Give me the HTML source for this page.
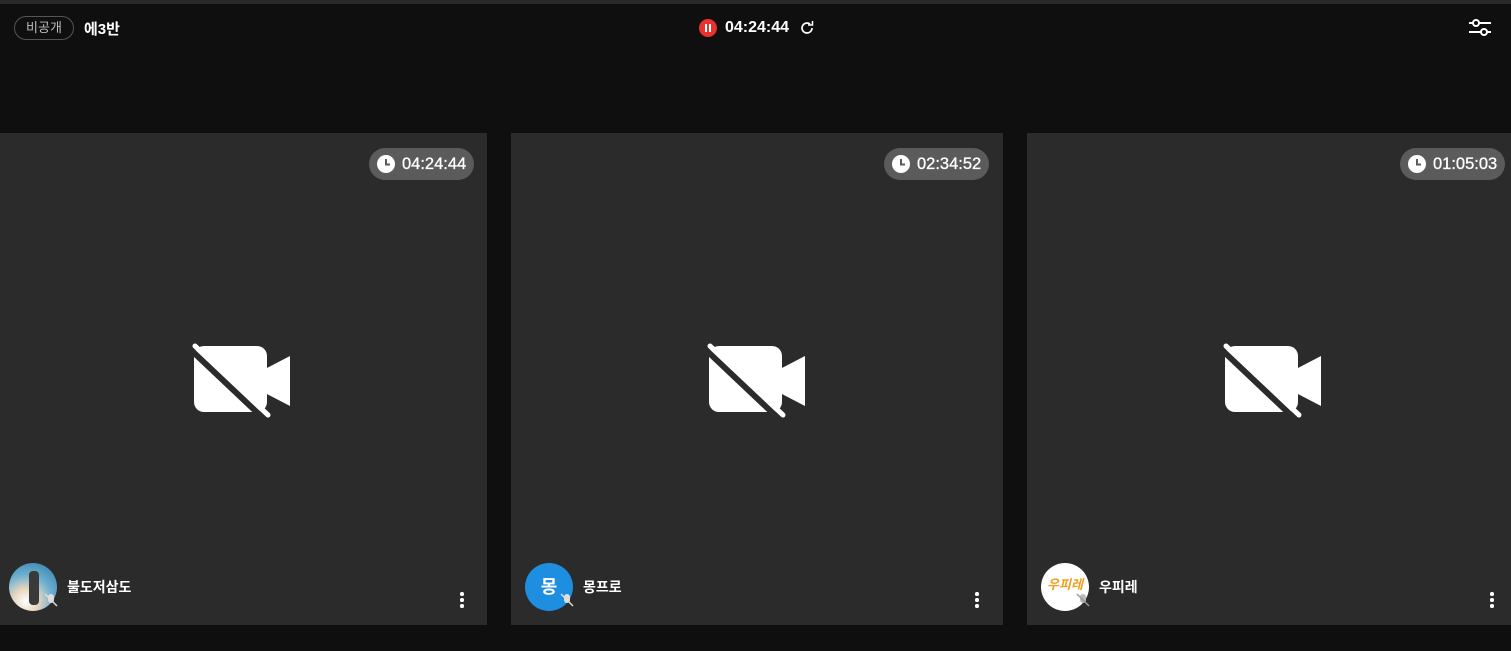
<!DOCTYPE html>
<html><head><meta charset="utf-8"><style>
*{margin:0;padding:0;box-sizing:border-box}
body{width:1511px;height:651px;background:#0f0f0f;overflow:hidden;position:relative;font-family:"Liberation Sans","Noto Sans CJK KR",sans-serif;color:#fff}
.top{position:absolute;left:0;top:0;width:1511px;height:4px;background:#2a2a2a}
.tag{position:absolute;left:14px;top:16px;width:60px;height:24px;border:1px solid #555;border-radius:12px;font-size:13px;color:#bbb;text-align:center;line-height:22px}
.title{position:absolute;left:84px;top:18px;font-size:15px;font-weight:bold}
.rec{position:absolute;left:699px;top:19px;width:18px;height:18px;border-radius:50%;background:#e8322e}
.rec:before,.rec:after{content:"";position:absolute;top:5px;width:2px;height:8px;background:#fff}
.rec:before{left:6px}.rec:after{left:10px}
.ttime{position:absolute;left:725px;top:19px;font-size:16px;font-weight:bold}
.tile{position:absolute;top:133px;height:492px;width:492px;background:#2b2b2b}
.badge{position:absolute;top:15px;height:32px;border-radius:16px;background:#5b5b5b;font-size:16.5px;line-height:32px;padding-left:33px;padding-right:8px;-webkit-text-stroke:0.3px #fff}
.badge svg{position:absolute;left:8px;top:7px}
.cam{position:absolute;top:208px}
.av{position:absolute;top:430px;width:48px;height:48px;border-radius:50%}
.mic{position:absolute;top:459px;width:16px;height:16px}
.name{position:absolute;top:444px;font-size:14px;font-weight:bold}
.dots{position:absolute;top:459px;width:4px}
.dots i{display:block;width:3.5px;height:3.5px;border-radius:50%;background:#fff;margin-bottom:2.5px}
</style></head><body>
<div class="top"></div>
<div class="tag">비공개</div>
<div class="title">에3반</div>
<div class="rec"></div>
<div class="ttime">04:24:44</div>
<svg style="position:absolute;left:798px;top:19px" width="18" height="18" viewBox="0 0 18 18"><path d="M14 9a5 5 0 1 1-2-4" fill="none" stroke="#fff" stroke-width="1.7"/><path d="M10 4h4.5V0" fill="none" stroke="#fff" stroke-width="1.5" transform="translate(0,2)"/></svg>
<svg style="position:absolute;left:1468px;top:18px" width="24" height="20" viewBox="0 0 24 20"><path d="M1 5h22M1 14h22" stroke="#fff" stroke-width="2"/><circle cx="8" cy="5" r="3" fill="#0f0f0f" stroke="#fff" stroke-width="2"/><circle cx="16" cy="14" r="3" fill="#0f0f0f" stroke="#fff" stroke-width="2"/></svg>

<div class="tile" style="left:-5px">
 <div class="badge" style="left:374px"><svg width="18" height="18" viewBox="0 0 18 18"><circle cx="9" cy="9" r="9" fill="#fff"/><path d="M9 4v5.5h4" stroke="#5b5b5b" stroke-width="2" fill="none"/></svg>04:24:44</div>
 <svg class="cam" style="left:195px" width="104" height="80" viewBox="0 0 104 80"><rect x="4" y="5" width="73" height="66" rx="10" fill="#fff"/><path d="M75 28l25-13v50l-25-13z" fill="#fff"/><path d="M1 9l73 69" stroke="#2b2b2b" stroke-width="6"/><path d="M5 5l73 69" stroke="#fff" stroke-width="5" stroke-linecap="round"/></svg>
 <div class="av" style="left:14px;background:radial-gradient(circle at 35% 80%,#fff 0,#e8d7c0 25%,#6aaed0 55%,#2b77a3 100%)"><div style="position:absolute;left:20px;top:8px;width:10px;height:34px;background:#3a3a3a;border-radius:4px"></div></div>
 <svg class="mic" style="left:48px" viewBox="0 0 16 16"><rect x="5" y="2" width="6" height="9" rx="3" fill="#ddd"/><path d="M2 2l12 12" stroke="#ddd" stroke-width="1.5"/></svg>
 <div class="name" style="left:72px">불도저삼도</div>
 <div class="dots" style="left:465px"><i></i><i></i><i></i></div>
</div>

<div class="tile" style="left:511px">
 <div class="badge" style="left:373px"><svg width="18" height="18" viewBox="0 0 18 18"><circle cx="9" cy="9" r="9" fill="#fff"/><path d="M9 4v5.5h4" stroke="#5b5b5b" stroke-width="2" fill="none"/></svg>02:34:52</div>
 <svg class="cam" style="left:194px" width="104" height="80" viewBox="0 0 104 80"><rect x="4" y="5" width="73" height="66" rx="10" fill="#fff"/><path d="M75 28l25-13v50l-25-13z" fill="#fff"/><path d="M1 9l73 69" stroke="#2b2b2b" stroke-width="6"/><path d="M5 5l73 69" stroke="#fff" stroke-width="5" stroke-linecap="round"/></svg>
 <div class="av" style="left:14px;background:#1e8ee0;font-size:18px;font-weight:bold;text-align:center;line-height:48px">몽</div>
 <svg class="mic" style="left:48px" viewBox="0 0 16 16"><rect x="5" y="2" width="6" height="9" rx="3" fill="#ddd"/><path d="M2 2l12 12" stroke="#ddd" stroke-width="1.5"/></svg>
 <div class="name" style="left:72px">몽프로</div>
 <div class="dots" style="left:464px"><i></i><i></i><i></i></div>
</div>

<div class="tile" style="left:1027px">
 <div class="badge" style="left:373px"><svg width="18" height="18" viewBox="0 0 18 18"><circle cx="9" cy="9" r="9" fill="#fff"/><path d="M9 4v5.5h4" stroke="#5b5b5b" stroke-width="2" fill="none"/></svg>01:05:03</div>
 <svg class="cam" style="left:194px" width="104" height="80" viewBox="0 0 104 80"><rect x="4" y="5" width="73" height="66" rx="10" fill="#fff"/><path d="M75 28l25-13v50l-25-13z" fill="#fff"/><path d="M1 9l73 69" stroke="#2b2b2b" stroke-width="6"/><path d="M5 5l73 69" stroke="#fff" stroke-width="5" stroke-linecap="round"/></svg>
 <div class="av" style="left:14px;background:#fff;color:#f0a020;font-size:13px;font-weight:bold;text-align:center;line-height:44px;font-style:italic">우피레</div>
 <svg class="mic" style="left:48px" viewBox="0 0 16 16"><rect x="5" y="2" width="6" height="9" rx="3" fill="#bbb"/><path d="M2 2l12 12" stroke="#999" stroke-width="1.5"/></svg>
 <div class="name" style="left:72px">우피레</div>
 <div class="dots" style="left:463px"><i></i><i></i><i></i></div>
</div>
</body></html>
